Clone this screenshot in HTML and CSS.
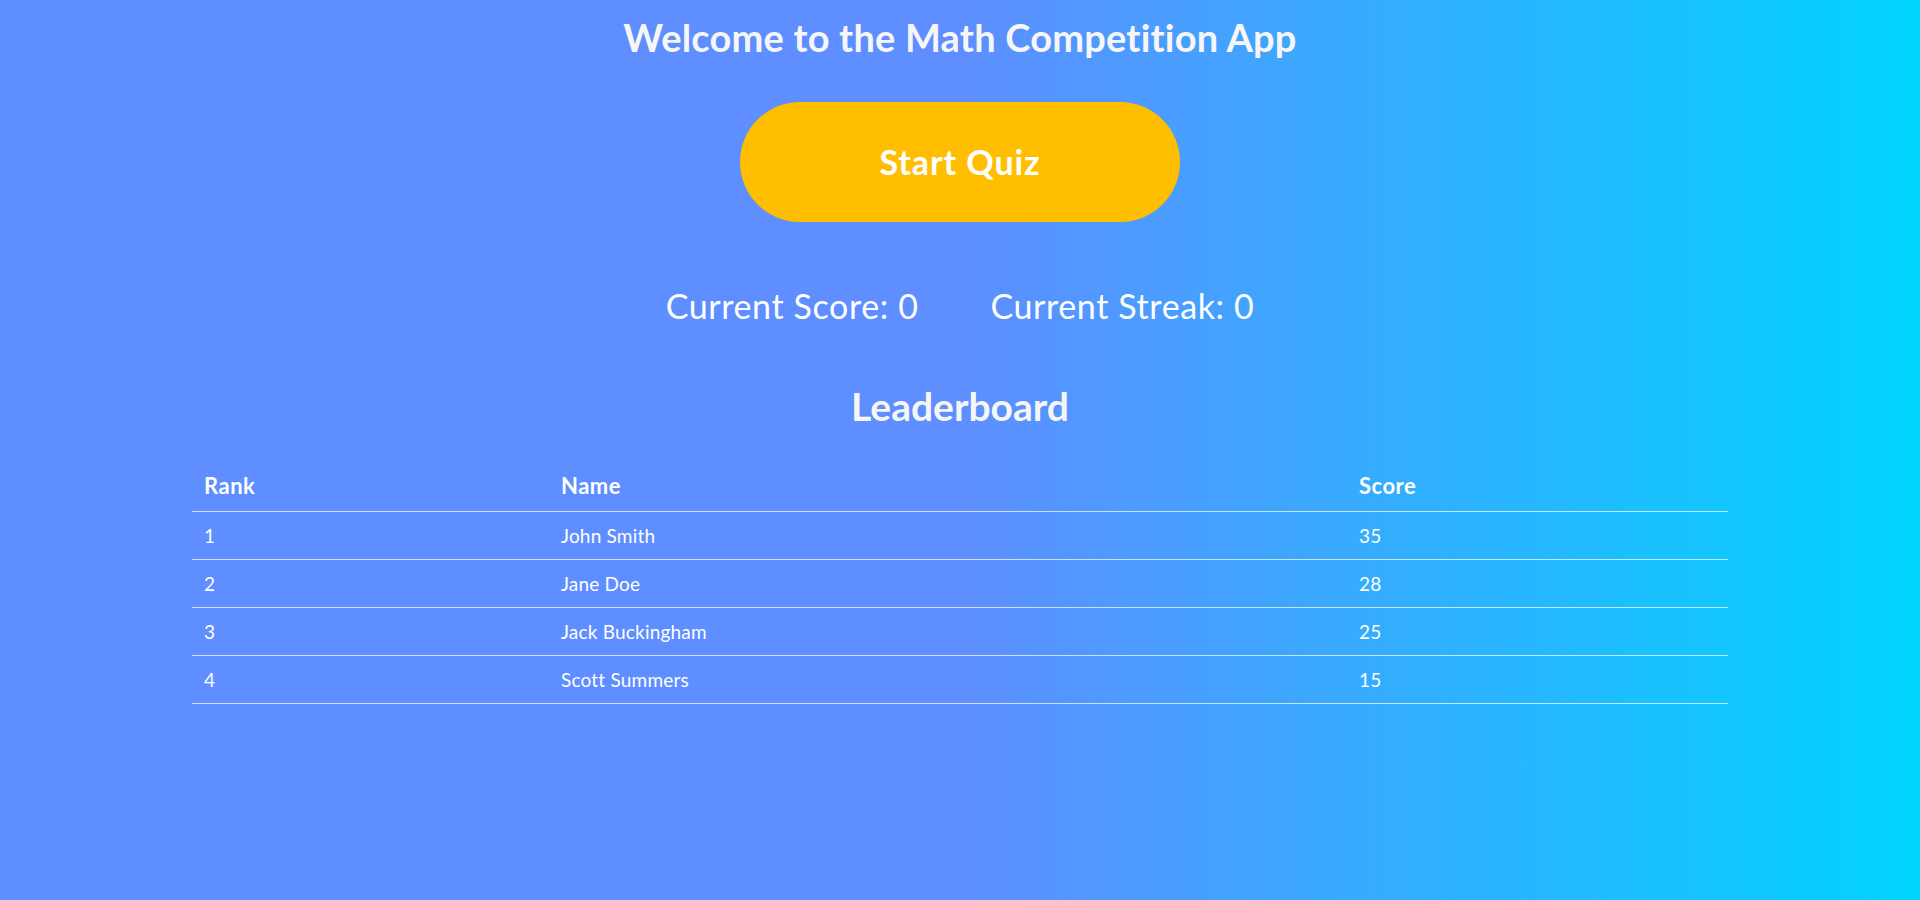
FILE: index.html
```html
<!DOCTYPE html>
<html lang="en">
<head>
<meta charset="utf-8">
<title>Math Competition App</title>
<link rel="stylesheet" href="styles.css">
</head>
<body>
<main class="app">
  <h1 class="title">Welcome to the Math Competition App</h1>
  <button class="start-btn" type="button">Start Quiz</button>
  <div class="stats">
    <span class="stat">Current Score: 0</span>
    <span class="stat">Current Streak: 0</span>
  </div>
  <h2 class="board-title">Leaderboard</h2>
  <table class="board">
    <thead>
      <tr>
        <th class="col-rank">Rank</th>
        <th class="col-name">Name</th>
        <th class="col-score">Score</th>
      </tr>
    </thead>
    <tbody>
      <tr><td>1</td><td>John Smith</td><td>35</td></tr>
      <tr><td>2</td><td>Jane Doe</td><td>28</td></tr>
      <tr><td>3</td><td>Jack Buckingham</td><td>25</td></tr>
      <tr><td>4</td><td>Scott Summers</td><td>15</td></tr>
    </tbody>
  </table>
</main>
</body>
</html>
```

FILE: styles.css
```css
* { box-sizing: border-box; }

html, body {
  margin: 0;
  padding: 0;
}

body {
  min-height: 100vh;
  font-family: Lato, "Open Sans", sans-serif;
  font-variant-ligatures: none;
  color: #ffffff;
  background: linear-gradient(90deg, #5e8eff 0%, #5e8eff 50%, #00d4ff 100%);
}

.app {
  display: flex;
  flex-direction: column;
  align-items: center;
  padding-top: 15px;
}

.title {
  margin: 0;
  font-size: 38px;
  font-weight: 700;
  letter-spacing: 0.2px;
  line-height: 1.2;
  color: #f6f6f6;
}

.start-btn {
  margin-top: 41px;
  width: 440px;
  padding: 40px 0;
  border: none;
  border-radius: 60px;
  background: #ffbf00;
  color: #ffffff;
  font-family: Lato, "Open Sans", sans-serif;
  font-variant-ligatures: none;
  font-size: 34px;
  font-weight: 700;
  letter-spacing: 0.9px;
  line-height: 40px;
  cursor: pointer;
}

.stats {
  margin-top: 64px;
  display: flex;
  gap: 72px;
  font-size: 34px;
  letter-spacing: 0.6px;
  line-height: 1.2;
}

.board-title {
  margin: 57px 0 0;
  font-size: 39px;
  font-weight: 700;
  line-height: 1.2;
  color: #f6f6f6;
}

.board {
  margin-top: 34px;
  width: 80%;
  border-collapse: collapse;
  text-align: left;
}

.board th,
.board td {
  padding: 12px;
  border-bottom: 1px solid rgba(255, 255, 255, 0.7);
}

.board th {
  font-size: 22px;
  font-weight: 700;
  letter-spacing: 0.5px;
  line-height: 23px;
  padding-top: 10px;
  padding-bottom: 14px;
}

.board td {
  font-size: 19px;
  font-weight: 400;
  letter-spacing: 0.2px;
  line-height: 23px;
}

.col-rank { width: 357px; }
.col-name { width: 798px; }
.col-score { width: 381px; }
```
